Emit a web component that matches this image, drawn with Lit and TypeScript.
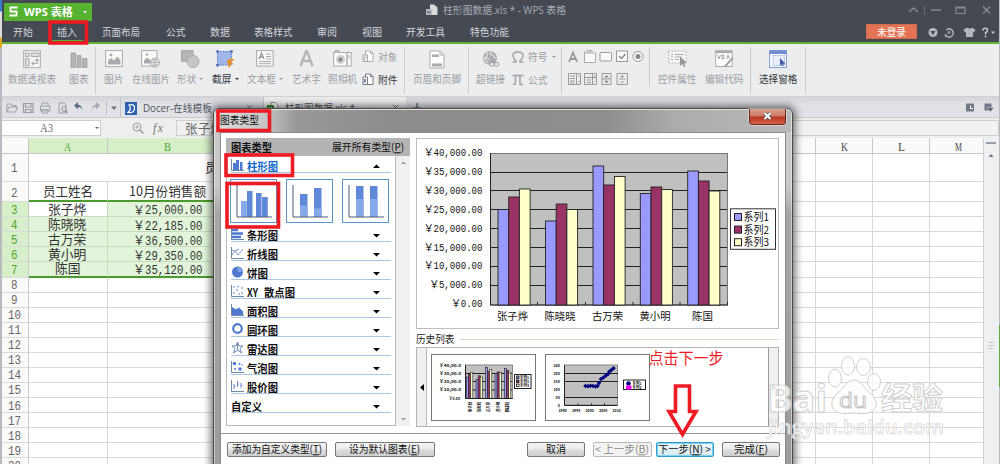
import { LitElement, html, svg, css, nothing } from "lit";
import { customElement } from "lit/decorators.js";

/* One line of text set to an exact advance width; a "(X)" mnemonic gets its letter underlined. */
const fit = (text: string, w: number, size: number, cls = "") => {
  const m = /^(.*\()([A-Z])(\).*)$/.exec(text);
  const body = m ? svg`${m[1]}<tspan text-decoration="underline">${m[2]}</tspan>${m[3]}` : text;
  return html`<svg class="fit ${cls}" width=${w} height=${size} viewBox="0 0 ${w} ${size}"><text x="0" y=${size * 0.88} font-size=${size} textLength=${w} lengthAdjust="spacingAndGlyphs">${body}</text></svg>`;
};

const icon = (w: number, h: number, body: unknown, cls = "") =>
  html`<svg class="ic ${cls}" width=${w} height=${h} viewBox="0 0 ${w} ${h}" fill="none">${body}</svg>`;

const G = "#a9abaf";

const ICONS = {
  pivot: icon(18, 19, svg`<rect x=".7" y=".7" width="16.6" height="17" fill="#f4f5f6" stroke=${G}/><path d="M2.500 3h3.500v3.500h-3.500zM8 3h8v3.500h-8zM2.500 8.500h3.500v7.500h-3.500z" stroke=${G} fill="#dfe0e2"/><path d="M9 13.500h5v-4M12.500 11l1.500-2 1.500 2M10.500 12l-1.500 1.500 1.500 1.500" stroke=${G} stroke-width="1.200"/>`),
  chart: icon(18, 19, svg`<path d="M1 3h4.500v14.500h-4.500zM7 5.500h4v12h-4zM12.500 8.500h4.500v9h-4.500z" fill="#b3b4b6" stroke="#97999c" stroke-width=".7"/>`),
  pic: icon(18, 18, svg`<rect x=".6" y=".6" width="16.800" height="16" fill="#fafafa" stroke=${G}/><path d="M3 14.500v-4l3-2.500 3 2.500 3.500-4 3 4v4z" fill=${G}/><circle cx="6" cy="5" r="1.500" fill=${G}/>`),
  web: icon(19, 18, svg`<path d="M.6.6h15.400v15.400h-15.400z" fill="#fafafa" stroke=${G}/><path d="M3 13.500v-3l3-3 4 3v3z" fill=${G}/><circle cx="6" cy="4.500" r="1.200" fill=${G}/><circle cx="14" cy="12.500" r="4.500" fill="#e3e4e5" stroke=${G}/><path d="M9.500 12.500h9M14 8v9M11 9.500q3 2 6 0M11 15.500q3-2 6 0" stroke=${G} stroke-width=".8"/>`),
  shape: icon(19, 18, svg`<rect x=".5" y=".5" width="11.500" height="11" fill="#b2b4b6" stroke=${G}/><circle cx="12" cy="11.500" r="6" fill="#c4c6c8" stroke=${G}/>`),
  crop: icon(19, 18, svg`<rect x="1.500" y="1.500" width="14" height="13.500" fill="#9fb6ea" stroke="#4d6dc0" stroke-dasharray="1.500 1.200"/><path d="M.3.300h2.400v2.400h-2.400zM14.300.300h2.400v2.400h-2.400zM.3 14h2.400v2.400h-2.400z" fill="#4564b4"/><path d="M17.500 10q-4-1-5.500 1.500q2 1 1 5.500M13 11.500l3.500 3" stroke="#ee8b1c" stroke-width="2"/>`),
  textbox: icon(18, 17, svg`<rect x=".6" y=".6" width="16.500" height="15.500" fill="#fafafa" stroke=${G}/><path d="M3 9l2.500-6 2.500 6M3.800 7h3.400" stroke="#999" stroke-width="1.300"/><path d="M10 4h5M10 6.500h5M10 9h5M3 11.500h12M3 13.700h12" stroke=${G}/>`),
  art: icon(15, 17, svg`<path d="M1.500 16l5.500-14.500h1l5.500 14.500M4 11h7" stroke="#b4b6b8" stroke-width="2.400"/>`),
  camera: icon(19, 17, svg`<rect x=".6" y="2.500" width="17.600" height="13.500" fill="#fafafa" stroke=${G}/><path d="M2 2.500v-1.800h4v1.800" fill="#ccc" stroke=${G}/><path d="M14 3v12.500" stroke=${G} stroke-width="1.500"/><path d="M16 5v4" stroke=${G}/><circle cx="7.500" cy="9.500" r="4" fill="#ddd" stroke="#c4c6c8"/><circle cx="7.500" cy="9.500" r="2.200" fill="#888"/>`),
  header: icon(16, 19, svg`<path d="M1 1h10l4 4v13h-14z" fill="#fff" stroke=${G}/><path d="M11 1v4h4" stroke=${G}/><path d="M3 4.500h7v2.500h-7zM3 13.500h10v3h-10z" fill="#aaacaf"/>`),
  link: icon(18, 18, svg`<circle cx="8" cy="8" r="7" fill="#aaacaf"/><path d="M4 2q3 3 0 5t2 6M9 1q-2 3 1 4t3 4M1.500 8q4-1 6 2" stroke="#dcdddf" stroke-width="1.300"/><rect x="7.500" y="12.500" width="5" height="3.500" rx="1.700" fill="#eee" stroke="#999"/><rect x="12" y="12.500" width="5" height="3.500" rx="1.700" stroke="#999"/>`),
  ctrl: icon(20, 18, svg`<rect x=".7" y="1" width="17.500" height="12" stroke=${G} stroke-dasharray="1.500 1.500" fill="#f6f6f6"/><path d="M3 4.500h2M7 4.500h9M3 7h2M7 7h6M3 9.500h2M7 9.500h4" stroke=${G}/><path d="M12 6l7 7-3 .3 1.500 3.200-1.500.7-1.500-3.200-2.500 2z" fill="#97999c"/>`),
  vba: icon(19, 18, svg`<rect x=".7" y=".7" width="16.500" height="15.800" fill="#fff" stroke=${G}/><path d="M.7.700h16.500v2.500h-16.500z" fill=${G}/><path d="M2.500 5l1.500 4 1.500-4M7 5v4h1.500q1.500-1 0-2q1-1 0-2zM11.500 9l1.500-4 1.500 4" stroke="#999" stroke-width=".9"/><path d="M17.500 7l-7 7.500-2 2 3-.5 7-7.500z" fill="#96989b"/>`),
  pane: icon(18, 18, svg`<rect x=".6" y=".6" width="16.800" height="16.800" fill="#fff" stroke="#7c97cf"/><path d="M.6.600h16.800v3.400h-16.800z" fill="#6f8fd0"/><rect x="4" y="5.500" width="11.500" height="10" fill="#e8eefb" stroke="#92a8d8" stroke-dasharray="1.200 1"/><path d="M11 8v8l2-1.800 1 2 1-.5-1-2h2.500z" fill="#3f5fa5"/>`),
  obj: icon(12, 13, svg`<path d="M3.500 1h5l2.500 2.500v8h-7.500z" fill="#fff" stroke=${G}/><path d="M8.500 1v2.500h2.500" stroke=${G}/><path d="M1 5h4.500v6.500h-4.500z" fill="#f4f4f4" stroke=${G}/><path d="M2.500 7v3M2.500 7h2" stroke=${G}/>`),
  clip: icon(12, 13, svg`<path d="M3.500 1h5l2.500 2.500v8h-7.500z" fill="#fff" stroke="#777b85"/><path d="M8.500 1v2.500h2.500" stroke="#777b85"/><path d="M1 4h4.500v7.500h-4.500z" fill="#fff" stroke="#777b85"/><path d="M3 6v3.500" stroke="#444b7a" stroke-width="1.400"/>`),
};

const TABS: [string, number, number][] = [
  ["开始", 12.5, 20], ["插入", 57, 20], ["页面布局", 101.5, 38], ["公式", 165.5, 19.5], ["数据", 209.5, 20],
  ["表格样式", 254, 38.5], ["审阅", 317, 20], ["视图", 361.5, 20], ["开发工具", 406, 39], ["特色功能", 469.5, 39],
];

const AMOUNTS: [string, string][] = [
  ["张子烨", "25,000.00"], ["陈晓晓", "22,185.00"], ["古万荣", "36,500.00"], ["黄小明", "29,350.00"], ["陈国", "35,120.00"],
];

const BARS = [
  [498, 209.5, 197, 189], [545.5, 221, 204, 209.5], [593, 166, 185, 176.5], [640.3, 193.5, 187, 189.5], [687.7, 171, 181, 191],
];
const FILLS = ["#9999ff", "#993366", "#ffffcc"];

@customElement("app-root")
export class AppRoot extends LitElement {
  static styles = css`
    :host { display: block; width: 1000px; height: 464px; overflow: hidden; position: relative; background: #b9bbc0;
      font-family: "Noto Sans CJK SC", sans-serif; color: #333; font-size: 10px; line-height: 1; }
    * { box-sizing: border-box; }
    svg { display: block; flex: none; overflow: visible; }
    .fit { fill: currentColor; }
    .mono { font-family: "Liberation Mono", "Noto Sans CJK SC", monospace; }
    .serif { font-family: "Liberation Serif", serif; }
    .lat { font-family: "Open Sans", "Noto Sans CJK SC", sans-serif; }
    .bold { font-weight: 700; }
    .window { margin-left: 1.5px; width: 997px; height: 464px; display: flex; flex-direction: column; background: #fff; }
    .top { height: 42px; background: #454952; flex: none; }
    .titlebar { height: 20px; display: flex; align-items: center; }
    .brand { width: 88px; height: 18px; margin: 3px 0 0 2.5px; background: #57b232; color: #fff; display: flex; align-items: center; padding-left: 5px; gap: 6px; }
    .caret { border: 2px solid transparent; border-top: 2.5px solid currentColor; border-bottom: 0; width: 0; height: 0; }
    .brand .caret { margin-left: 4px; }
    .doc { margin-left: 334px; display: flex; gap: 5px; align-items: center; color: #a7abb3; }
    .wctl { margin-left: auto; display: flex; padding-right: 6px; }
    .menu { display: flex; height: 22px; align-items: center; color: #d3d6db; padding-top: 2px; }
    .menu .t { flex: none; }
    .login { margin-left: auto; width: 51px; height: 15px; background: #e27354; border: 1px solid #cf6c50; color: #fff; display: flex; align-items: center; justify-content: center; margin-top: -1px; }
    .menu .help { margin: 0 3px 0 11px; }
    .green { height: 2px; background: #5fb531; flex: none; }
    .ribbon { height: 53px; flex: none; background: #ebedef; display: flex; border-bottom: 1px solid #cfd1d5; color: #9c9ea2; }
    .cell { display: flex; flex-direction: column; align-items: center; padding-top: 6px; position: relative; flex: none; }
    .cell .pic { height: 24px; }
    .cell .row { display: flex; gap: 3px; align-items: center; }
    .bar { width: 1px; height: 47px; margin: 3px 0 0 -1px; background: #cbcdd1; flex: none; }
    .bar.short { height: 40px; }
    .dark { color: #35373b; }
    .pair { display: flex; flex-direction: column; gap: 10px; padding-top: 6px; flex: none; }
    .pair .row { display: flex; gap: 4px; align-items: center; height: 13px; }
    .tabs { height: 21px; flex: none; background: linear-gradient(#d4d6dc, #e0e2e6 40%); display: flex; border-bottom: 1px solid #c9cbcf; }
    .quick { width: 118px; display: flex; align-items: center; padding: 1px 0 0 4px; }
    .doctab { width: 143px; display: flex; align-items: center; gap: 6px; padding: 2px 0 0 4px; color: #50545c; border-left: 1px solid #c3c5ca; }
    .doctab.on { background: #edeef0; padding-left: 3px; gap: 6px; }
    .right { margin-left: auto; display: flex; align-items: center; padding-right: 5px; }
    .formula { height: 20px; flex: none; background: #eee; display: flex; align-items: center; color: #666; }
    .namebox { width: 99px; height: 16px; background: #fff; border: 1px solid #cdcdcd; border-left: 0; display: flex; align-items: center; padding-left: 38px; gap: 42px; }
    .fx { margin-left: 31px; display: flex; gap: 9px; align-items: center; }
    .fbox { margin-left: 12px; flex: 1; height: 16px; background: #f1f1f1; border: 1px solid #cfcfcf; display: flex; align-items: center; padding-left: 8px; }
    .body { flex: 1; display: flex; min-height: 0; }
    .sheet { width: 981.5px; overflow: hidden; flex: none; }
    .r { display: flex; height: 15.07px; }
    .r > div { border-right: 1px solid #d6d6d6; border-bottom: 1px solid #d9d9d9; width: 57.1px; flex: none; display: flex; align-items: center; justify-content: center; }
    .r > .n { width: 27px; background: #fafafa; color: #666; border-right-color: #c9c9c9; }
    .r > .a { width: 79px; }
    .r > .b { width: 120.5px; }
    .r > .gap { width: 531px; }
    .r.head { height: 15.6px; }
    .r.head > div { background: #fafafa; color: #444; border-color: #c6c6c6; padding-top: 1px; }
    .r.head > .g, .r.sel > .n { background: #d6efc8; color: #4aa32c; }
    .r.sel > .sc { background: #e2f5da; border-color: #c5dcbb; }
    .r.sel > .cur { background: #fff; }
    .r.r1 { height: 28.8px; }
    .r.r2 { height: 19.8px; }
    .r.r2 > div { padding-top: 1px; }
    .r.r2 > .sc, .r.last > .sc { border-bottom: 2px solid #4b9a2d; }
    .r > .merge { width: 730.5px; justify-content: flex-start; padding-left: 176px; }
    .money { display: flex; align-items: center; padding-top: 1px; }
    .vs { flex: 1; background: #eff0f2; border-left: 1px solid #cfd1d4; display: flex; flex-direction: column; align-items: center; padding-top: 4px; }
    .edge { position: absolute; left: 999px; top: 325px; width: 1px; height: 62px; background: #62ac3e; }
    .desk { position: absolute; left: 0; top: 0; width: 1.5px; height: 50px; background: linear-gradient(#3a7bd0 0 11px, #ddd 12px 37px, #e0a71c 38px 47px, #bbb 48px); }

    .dialog { position: absolute; left: 212.5px; top: 108px; width: 580.5px; height: 370px; padding: 0 6px; border: 1px solid #4b4b4b; border-radius: 6px 6px 0 0;
      background: linear-gradient(#c9c9c9 0 76px, #a6a6a6 105px, #9b9b9b); box-shadow: inset 0 0 0 1px rgba(255,255,255,.45), 0 0 9px 2px rgba(0,0,0,.6); }
    .cap { height: 22px; margin: 1px -5px 0; display: flex; align-items: flex-start; border-radius: 5px 5px 0 0; background: linear-gradient(90deg, #ddd 0, #c4c4c4 9%, #999 14%, #8c8c8c 32%, #8e8e8e 68%, #acacac 80%, #b8b8b8); color: #111; }
    .cap .name { margin: 5px 0 0 5px; }
    .close { margin: -1px 5px 0 auto; width: 37px; height: 15.5px; border: 1px solid #6b2a20; border-top: 0; border-radius: 0 0 4px 4px; background: linear-gradient(#dba092, #cd7765 48%, #b43420 52%, #d76444); display: flex; align-items: center; justify-content: center; box-shadow: 0 0 0 .5px #eee; }
    .client { height: 340px; background: #fff; border: 1px solid #888; display: flex; flex-direction: column; }
    .cols { height: 301px; padding: 5px 0 0 5px; display: flex; gap: 6px; border-bottom: 1px solid #999; flex: none; }
    .left { width: 184.5px; color: #111; }
    .lh { height: 18px; background: #b4b4b4; display: flex; align-items: center; justify-content: space-between; padding: 0 6px 0 5px; }
    .lb { display: flex; height: 270px; }
    .list { width: 170.5px; border: 1px solid #bbb; border-top: 0; padding: 0 4px; }
    .sb { flex: 1; background: #f0f0f0; display: flex; flex-direction: column; justify-content: space-between; align-items: center; padding: 5px 0; }
    .it { height: 19.06px; border-bottom: 1px solid #a9c6e3; display: flex; align-items: flex-end; width: 160px; gap: 3px; }
    .it .ic { margin-bottom: 1px; }
    .it.first { height: 17px; color: #1268cc; }
    .it .ic.ar { margin: 0 11px 3px auto; }
    .it.first .ic.ar { margin-bottom: 4px; }
    .th { display: flex; gap: 9px; height: 49.5px; padding-top: 5.5px; margin-left: -1px; }
    .rightcol { width: 363px; }
    .hist { display: flex; height: 18px; align-items: center; gap: 5px; color: #222; padding-top: 2px; }
    .hist i { flex: 1; height: 1px; background: #dcdcd2; }
    .hl { height: 80px; border: 1px solid #b4b4b4; display: flex; align-items: center; }
    .hs { width: 10px; height: 78px; background: #f0f0f0; border-right: 1px solid #bbb; display: flex; align-items: center; justify-content: center; }
    .hs.e { margin-left: auto; border: 0; border-left: 1px solid #999; }
    .hl .m { margin-left: 4px; }
    .hl .m + .m { margin-left: 9px; }
    .foot { display: flex; padding: 8px 0 0 6px; color: #111; }
    .btn { height: 15px; border: 1px solid #777; border-radius: 2px; background: linear-gradient(#f4f4f4, #ebebeb 48%, #dcdcdc 52%, #cfcfcf); display: flex; align-items: center; justify-content: center; flex: none; }
    .btn.off { color: #888; border-color: #b8b8b8; background: #f4f4f4; }
    .btn.def { border: 1.5px solid #2b9bd0; box-shadow: inset 0 0 0 1px #7fd3f0; background: linear-gradient(#eef7fb, #d5e9f2); }
    .over { position: absolute; left: 0; top: 0; }
  `;

  private cell(w: number, ic: unknown, label: string, lw: number, opt: { caret?: boolean; dark?: boolean } = {}) {
    return html`<div class="cell ${opt.dark ? "dark" : ""}" style="width:${w}px">
      <div class="pic">${ic}</div>
      <div class="row">${fit(label, lw, 10)}${opt.caret ? html`<i class="caret"></i>` : nothing}</div>
    </div>`;
  }

  private top() {
    let x = 1.5;
    return html`<header class="top">
      <div class="titlebar">
        <div class="brand">${icon(9, 11, svg`<path d="M8.500 1.500h-7v4h6v4h-7" stroke="#fff" stroke-width="1.800"/>`)}
          ${fit("WPS 表格", 49, 11, "lat bold")}<i class="caret"></i></div>
        <div class="doc">${icon(12, 12, svg`<path d="M4 .5h4l3.500 3v7.500h-7.500z" fill="#d8dade"/><path d="M0 5h6v6h-6z" fill="#b9bcc2"/><path d="M2 9.500v-3M4 9.500v-2" stroke="#454952"/>`)}
          ${fit("柱形图数据.xls * - WPS 表格", 123, 10.5, "lat")}</div>
        <div class="wctl">${icon(86, 12, svg`<path d="M2 8l4.500-4 4.500 4" stroke="#858992" stroke-width="1.500"/><path d="M17.500 1v10" stroke="#666b74"/><path d="M24 6h10" stroke="#858992" stroke-width="1.500"/><path d="M49 3h9v6.500h-9zM49 4h9" stroke="#858992" stroke-width="1.200"/><path d="M76 2.500l7 7M83 2.500l-7 7" stroke="#858992" stroke-width="1.500"/>`)}</div>
      </div>
      <div class="menu">
        ${TABS.map(([t, at, w]) => { const gap = at - x; x = at + w; return html`<div class="t" style="margin-left:${gap}px">${fit(t, w, 10)}</div>`; })}
        <div class="login">${fit("未登录", 29, 10)}</div>
        <div class="help">${icon(68, 11, svg`<circle cx="5" cy="5.500" r="4.500" fill="#b3b7be"/><path d="M2.500 4h5l-2.500 4z" fill="#454952"/><path d="M18.500 3a4 4 0 1 1 0 6h-1v-2" stroke="#b3b7be" stroke-width="1.300"/><circle cx="21" cy="5.500" r="1" stroke="#b3b7be"/><path d="M38 1h2q1.500 1.500 3 0h2l2.500 2-1.500 2.500-1-.5v5h-7v-5l-1 .5-1.500-2.500z" fill="#b3b7be"/><path d="M55 3.500q0-2.200 2.300-2.200t2.300 2q0 1.200-2 2.400v1.500M57.500 8.500v1.700" stroke="#c6c9ce" stroke-width="1.600"/><path d="M63 4.500h4l-2 2.500z" fill="#c6c9ce"/>`)}</div>
      </div>
    </header><div class="green"></div>`;
  }

  private ribbon() {
    const c = this.cell.bind(this);
    const bar = html`<div class="bar"></div>`;
    return html`<div class="ribbon">
      ${c(61, ICONS.pivot, "数据透视表", 48)}${c(33, ICONS.chart, "图表", 19.5)}${bar}
      ${c(36, ICONS.pic, "图片", 19.5)}${c(38, ICONS.web, "在线图片", 38)}${c(41, ICONS.shape, "形状", 19.5, { caret: true })}
      ${c(30, ICONS.crop, "截屏", 19.5, { caret: true, dark: true })}${c(48, ICONS.textbox, "文本框", 29, { caret: true })}
      ${c(35, ICONS.art, "艺术字", 29)}${c(38, ICONS.camera, "照相机", 29)}
      <div class="pair" style="width:43.5px;padding-left:0">
        <div class="row">${ICONS.obj}${fit("对象", 19.5, 10)}</div>
        <div class="row dark">${ICONS.clip}${fit("附件", 19.5, 10)}</div></div>${bar}
      ${c(64, ICONS.header, "页眉和页脚", 48)}${bar}
      ${c(43, ICONS.link, "超链接", 29)}
      <div class="pair" style="width:50px">
        <div class="row">${icon(12, 12, svg`<path d="M.500 11h3.500v-1.500q-3-2-3-5q0-3.500 5-3.500t5 3.500q0 3-3 5v1.500h3.500" stroke="#a1a3a7" stroke-width="1.400"/>`)}${fit("符号", 19.5, 10)}<i class="caret"></i></div>
        <div class="row">${icon(12, 12, svg`<path d="M.5 1.500h11M3.500 1.500v7.500q0 1.500-2.500 1.500M8 1.500v9h3" stroke="#a1a3a7" stroke-width="1.500"/>`)}${fit("公式", 19.5, 10)}</div></div>${bar}
      <div class="pair" style="width:88px;padding-left:6px">
        ${icon(76, 36, svg`<path d="M1 12l4-9.500 4 9.500M2.500 9h5" stroke="#999" stroke-width="1.800"/>
        <path d="M16.500 3h11v9.500h-11zM16.500 4.500v-3M19 3v-2.500h2v2M22 3v-2.500h2v2" stroke=${G} fill="#fafafa"/>
        <rect x="32" y="2.500" width="11.500" height="8.500" rx="1" stroke="#999" fill="#fafafa"/>
        <rect x="48.500" y="1" width="11" height="10.500" stroke="#999" fill="#fafafa"/><path d="M51 6l2.500 2.500 4-4.500" stroke="#888" stroke-width="1.400"/>
        <circle cx="70" cy="6.500" r="5" stroke="#999" fill="#fafafa"/><circle cx="70" cy="6.500" r="2.500" fill="#888"/>
        <path d="M.5 23.500h12v11h-12zM8.500 23.500v11M2 26h5M2 28.500h5M2 31h5M2 33h4M10 26h1.500M10 31.500h1.500" stroke="#999"/>
        <path d="M16.500 23.500h12v11h-12zM16.500 27.500h12M24.500 23.500v11M18.500 30h4.500M18.500 32.500h4.500M26 26h1.500M26 31.500h1" stroke="#999"/>
        <path d="M34 23.500h9v11h-9zM34 29h9" stroke="#999"/><path d="M36 27.500l2.500-2.500 2.500 2.500zM36 30.800h5l-2.500 2.500z" fill="#888"/>
        <path d="M49 23.500h10.500v11h-10.500zM51 29h6.500M54.200 25v3M52.700 26.500h3M52.700 32h3" stroke="#999"/>`)}
      </div><div class="bar short"></div>
      ${c(55, ICONS.ctrl, "控件属性", 38.5)}${c(38, ICONS.vba, "编辑代码", 38.5)}
      <div style="width:8px"></div>${bar}${c(54.5, ICONS.pane, "选择窗格", 38.5, { dark: true })}${bar}
    </div>`;
  }

  private bars() {
    return html`<div class="tabs">
      <div class="quick">${icon(114, 14, svg`<path d="M1 11v-8h4l1 1.500h4v1.500M1 11l2-5h8.500l-2 5z" stroke="#9b9ea5"/>
        <path d="M17.500 2.500h9.500v9h-9.500zM19.500 2.500v3.500h5.500v-3.500M19.500 11.500v-3h5.500v3" stroke="#9b9ea5" stroke-width="1.200"/>
        <path d="M36 5v-3h6v3M34.500 5h9.500v5h-9.500zM36 8.500h6v3.500h-6z" stroke="#9b9ea5"/>
        <path d="M53 2h5l2 2v8h-7z" stroke="#9b9ea5"/><circle cx="58" cy="8" r="2.300" fill="#e2e4e8" stroke="#8b8e95"/><path d="M59.500 9.500l2 2.500" stroke="#8b8e95" stroke-width="1.300"/>
        <path d="M76 11q.5-5-4-5v2.500l-4-4 4-3.500v2.500q5 1 4 7.500z" fill="#5c6a85"/>
        <path d="M86 11q-.5-5 4-5v2.500l4-4-4-3.500v2.500q-5 1-4 7.500z" fill="#a6a9b1"/>
        <path d="M100.500 0v14" stroke="#c3c5ca"/><path d="M105 5.500h6l-3 3.500z" fill="#6b6e75"/>`)}</div>
      <div class="doctab">${icon(12, 13, svg`<path d="M0 0h12v13h-12z" fill="#2f62b0"/><path d="M4 3q6-1.500 5.500 3.500t-6.500 4q4-3.500 1-7.500z" stroke="#fff" stroke-width="1.200"/>`)}
        ${fit("Docer-在线模板", 69, 10.5, "lat")}${icon(40, 8, svg`<path d="M29 1l5 5M34 1l-5 5" stroke="#777"/>`)}</div>
      <div class="doctab on">${icon(12, 12, svg`<path d="M4 .5h4l3 3v8h-7z" fill="#fff" stroke="#888"/><path d="M0 3h7v7h-7z" fill="#3f8d2c"/><path d="M2 5l3 3M5 5l-3 3" stroke="#fff"/>`)}
        ${fit("柱形图数据.xls *", 70, 10.5, "lat")}${icon(50, 8, svg`<path d="M32 1l5 5M37 1l-5 5" stroke="#666"/>`)}</div>
      ${icon(20, 20, svg`<path d="M11 6v9M7.500 11h7" stroke="#4b5270" stroke-width="1.200"/>`)}
      <div class="right">${icon(28, 9, svg`<path d="M0 .5h8v8h-8z" fill="#747986"/><path d="M4.500 2.500v3h2.500" stroke="#fff"/><path d="M18.500 .500h7v5h-2v2h-5z" fill="#747986"/><path d="M21 4.500h7l-3.500 4.500z" fill="#5c6170" stroke="#e0e2e6" stroke-width=".5"/>`)}</div>
    </div>
    <div class="formula"><div class="namebox">${fit("A3", 13, 11.5, "serif")}<i class="caret"></i></div>
      <div class="fx">${icon(12, 12, svg`<circle cx="5" cy="5" r="4" stroke="#999"/><path d="M8 8l3.500 3.500" stroke="#999" stroke-width="1.500"/><path d="M3 5h4M5 3v4" stroke="#aaa"/>`)}
      ${icon(11, 12, svg`<text x="0" y="9.500" font-size="12" font-style="italic" font-family="Liberation Serif" fill="#777" textLength="10">fx</text>`)}</div>
      <div class="fbox">${fit("张子烨", 38, 13)}</div></div>`;
  }

  private sheet() {
    const tail = html`<div class="gap"></div><div></div><div></div><div></div><div></div>`;
    const h = (s: string) => fit(s, 7, 12, "serif");
    return html`<div class="body"><div class="sheet">
      <div class="r head"><div class="n"></div><div class="a g">${h("A")}</div><div class="b g">${h("B")}</div><div class="gap"></div>
        <div></div><div>${h("K")}</div><div>${h("L")}</div><div>${h("M")}</div></div>
      <div class="r r1"><div class="n">${fit("1", 6.5, 13, "mono")}</div><div class="merge">${fit("员工销售额统计表", 104, 13)}</div><div></div><div></div><div></div><div></div></div>
      <div class="r r2"><div class="n">${fit("2", 6.5, 13, "mono")}</div><div class="a sc">${fit("员工姓名", 50, 13)}</div><div class="b sc">${fit("10月份销售额", 77, 13)}</div>${tail}</div>
      ${AMOUNTS.map(([n, v], i) => html`<div class="r sel ${i === 4 ? "last" : ""}"><div class="n">${fit(String(i + 3), 6.5, 13, "mono")}</div>
        <div class="a sc ${i ? "" : "cur"}">${fit(n, n.length * 12.8, 13)}</div>
        <div class="b sc"><div class="money">${fit("￥", 12, 12)}${fit(v, 57.5, 12.5, "mono")}</div></div>${tail}</div>`)}
      ${Array.from({ length: 13 }, (_, i) => html`<div class="r"><div class="n">${fit(String(i + 8), i < 2 ? 6.5 : 13, 13, "mono")}</div><div class="a"></div><div class="b"></div>${tail}</div>`)}
    </div><div class="vs">${icon(10, 220, svg`<path d="M0 1h10" stroke="#7a8397" stroke-width="1.500"/><path d="M2.500 15l2.500-3 2.500 3z" fill="#6d7689"/><path d="M2.500 200.500h5M2.500 203.500h5M2.500 206.500h5" stroke="#c3c5c9"/>`)}</div></div>`;
  }

  private thumbs() {
    return html`<div class="th">${[
      [[10, 22, 16], [16, 12, 26], [25, 14, 24], [31, 18, 20]],
      [[13, 15, 23], [27, 9, 29]],
      [[13, 7, 31], [27, 7, 31]],
    ].map((b, k) => icon(47, 44, svg`<rect x=".5" y=".5" width="46" height="43" fill="#fff" stroke="#5b94cd"/>
      ${b.map(([x, y, h], i) => {
        const split = k === 0 ? y : k === 1 ? 24 + x / 5 : 20;
        const w = k ? 7.5 : 5.5;
        return svg`<rect x=${x + 1} y=${y} width=${w} height=${h} fill="#6088d8"/>${k || i % 3 === 0 ? svg`<rect x=${x + 1} y=${split} width=${w} height=${38 - split} fill=${k || !i ? "#86a9ea" : "#6088d8"}/>` : nothing}`;
      })}
      <path d="M7 6v32h35" stroke="#4c5c78"/>`))}</div>`;
  }

  private list() {
    const ax = (b: unknown) => icon(13, 12, svg`<path d="M.5 0v11.500h12.500" stroke="#7187a8"/>${b}`);
    const dots = (p: number[][]) => p.map(([x, y, r]) => svg`<circle cx=${x} cy=${y} r=${r || 0.8} fill="#4f79cf"/>`);
    const items: [string, number, unknown][] = [
      ["条形图", 31, ax(svg`<path d="M1 2h6M1 5.500h11M1 9h9" stroke="#4f79cf" stroke-width="2.400"/>`)],
      ["折线图", 31, ax(svg`<path d="M1 8l3-4 3 4 5-6M1 3l3 1 4-2" stroke="#7d9ad2"/>`)],
      ["饼图", 21, icon(13, 12, svg`<circle cx="6.500" cy="6" r="5.500" fill="#4f79cf"/><path d="M6.500 6v-5.500a5.500 5.500 0 0 1 5.500 5.500z" fill="#7ea0e2"/>`)],
      ["XY 散点图", 47, ax(dots([[3, 2, 0], [7, 1.5, 0], [11, 3, 0], [3, 8, 0], [6, 5, 0], [11, 8, 0], [8, 9, 0]]))],
      ["面积图", 31, ax(svg`<path d="M1 11v-8l4 2.500 3-2 4 4v3.500z" fill="#4f79cf"/>`)],
      ["圆环图", 31, icon(13, 12, svg`<circle cx="6.500" cy="5.500" r="4.300" stroke="#4f79cf" stroke-width="2.200"/>`)],
      ["雷达图", 31, icon(13, 12, svg`<path d="M6.500 0l1.500 4h4l-3 2.500 1.500 4.500-4-3-4 3 1.500-4.500-3-2.500h4zM6.500 0v8" stroke="#6d86b5"/>`)],
      ["气泡图", 31, ax(dots([[3.5, 2.5, 1.8], [8.5, 3, 1], [4, 8, 1], [9, 8, 1.8], [11, 4, 0.7]]))],
      ["股价图", 31, ax(svg`<path d="M3 4v5M6.500 1v6M10 3v5M3 6h1.500M6.500 4h1.500M10 5.500h1.500" stroke="#6d8fd6"/>`)],
      ["自定义", 31, nothing],
    ];
    const name = (t: string, w: number) => t.startsWith("XY")
      ? html`${fit("XY", 11, 11, "bold")}<span></span>${fit("散点图", 31, 11, "bold")}` : fit(t, w, 11, "bold");
    return html`<div class="left"><div class="lh">${fit("图表类型", 41, 11, "bold")}${fit("展开所有类型(P)", 72, 10.5)}</div>
      <div class="lb"><div class="list">
        <div class="it first">${ax(svg`<path d="M2 4h3v7h-3zM5 1h3v10h-3zM9 3h2.500v8h-2.500z" fill="#4f79cf"/>`)}${fit("柱形图", 31, 11, "bold")}${icon(7, 4, svg`<path d="M0 4l3.500-3.500 3.500 3.500z" fill="#000"/>`, "ar")}</div>
        ${this.thumbs()}
        ${items.map(([t, w, i]) => html`<div class="it">${i}${name(t, w)}${icon(7, 4, svg`<path d="M0 0h7l-3.500 3.500z" fill="#000"/>`, "ar")}</div>`)}
      </div><div class="sb">${icon(5, 3, svg`<path d="M0 3l2.500-2.500 2.500 2.500z" fill="#999"/>`)}${icon(5, 3, svg`<path d="M0 0h5l-2.500 2.500z" fill="#999"/>`)}</div></div></div>`;
  }

  private chart() {
    const t = (s: string, x: number, y: number, w: number, size = 10.5) =>
      svg`<text x=${x} y=${y} font-size=${size} textLength=${w} lengthAdjust="spacingAndGlyphs">${s}</text>`;
    const labels = ["40,000.00", "35,000.00", "30,000.00", "25,000.00", "20,000.00", "15,000.00", "10,000.00", "5,000.00", "0.00"];
    return html`<svg width="363" height="191" viewBox="416 138 363 191" fill="#111">
      <rect x="416.500" y="138.500" width="362" height="190" fill="#fff" stroke="#bdbdbd"/>
      <rect x="490.500" y="153.500" width="237" height="151.500" fill="#c0c0c0" stroke="#777"/>
      ${[172.5, 190.5, 209.5, 228.5, 247.5, 266.5, 285.5].map((y) => svg`<path d="M490 ${y}h237" stroke="#222"/>`)}
      <path d="M490.500 153v152h237M537.500 305v-3M585.500 305v-3M633 305v-3M680 305v-3M727.500 305v-3" stroke="#222" fill="none"/>
      ${BARS.map((b) => FILLS.map((f, i) => svg`<rect x=${b[0] + i * 10.7} y=${b[i + 1]} width="10.700" height=${305 - b[i + 1]} fill=${f} stroke="#222" stroke-width=".9"/>`))}
      ${labels.map((l, i) => { const w = l.length * 5.45; return svg`${t("￥", 482 - w - 9.5, 156 + i * 18.9, 10.5)}<g class="mono">${t(l, 482.5 - w, 156 + i * 18.9, w, 11)}</g>`; })}
      ${t("张子烨", 497, 320, 31)}${t("陈晓晓", 544.5, 320, 31)}${t("古万荣", 592, 320, 31)}${t("黄小明", 639.5, 320, 31)}${t("陈国", 692, 320, 21)}
      <rect x="730.500" y="208.800" width="45" height="40.500" fill="#fff" stroke="#333"/>
      ${FILLS.map((f, i) => svg`<rect x="734.500" y=${213.5 + i * 12.6} width="7" height="7" fill=${f} stroke="#222"/>${t("系列" + (i + 1), 743.5, 221 + i * 12.6, 25.5, 11)}`)}
    </svg>`;
  }

  private history() {
    const a = ["40,00.0", "30,00.0", "20,00.0", "10,00.0", "0.00"];
    const s = (x: number, y: number, txt: string, w: number, size = 4) => svg`<text x=${x} y=${y} font-size=${size} font-weight="700" textLength=${w} lengthAdjust="spacingAndGlyphs" fill="#111">${txt}</text>`;
    return html`<div class="hist">${fit("历史列表", 38.5, 10)}<i></i></div>
    <div class="hl"><div class="hs">${icon(4, 7, svg`<path d="M4 0v7l-4-3.500z" fill="#000"/>`)}</div>
      <svg class="m" width="105" height="67" viewBox="431 354 105 67">
        <rect x="431.500" y="354.500" width="104" height="66" fill="#fff" stroke="#777"/>
        <rect x="465.500" y="365" width="47" height="33.500" fill="#c0c0c0" stroke="#888"/>
        ${[373.5, 381.5, 390].map((y) => svg`<path d="M465 ${y}h47" stroke="#222"/>`)}
        ${BARS.map((b, g) => FILLS.map((f, i) => svg`<rect x=${466.5 + g * 9.5 + i * 2.1} y=${398.5 - (305 - b[i + 1]) * 0.225} width="2.100" height=${(305 - b[i + 1]) * 0.225} fill=${f} stroke="#222" stroke-width=".6"/>`))}
        <path d="M465.500 365v33.500h47" stroke="#222" fill="none"/>
        ${a.map((l, i) => s(i === 4 ? 449 : 439, 366.5 + i * 8.3, "￥" + l, i === 4 ? 11 : 22))}
        ${AMOUNTS.map(([n], i) => svg`<g transform="translate(${471.5 + i * 9.4} 412) rotate(-90)">${s(0, 0, n, 10, 4)}</g>`)}
        <rect x="514.500" y="374.500" width="16.500" height="14" fill="#fff" stroke="#222"/>
        ${FILLS.map((f, i) => svg`<rect x="516.500" y=${376 + i * 4} width="2.500" height="2.500" fill=${f} stroke="#111" stroke-width=".8"/>${s(520, 379 + i * 4, "系列" + (i + 1), 9)}`)}
      </svg>
      <svg class="m" width="105" height="67" viewBox="545 354 105 67">
        <rect x="545.500" y="354.500" width="104" height="66" fill="#fff" stroke="#777"/>
        <rect x="564.500" y="365" width="53" height="40" fill="#c0c0c0" stroke="#888"/>
        ${[373.5, 381.5, 397.5].map((y) => svg`<path d="M564 ${y}h54" stroke="#222"/>`)}
        <path d="M564.500 365v40.500h53M578 405v-1.500M591.500 405v-1.500M604.500 405v-1.500" stroke="#222" fill="none"/>
        ${[[585.5, 386], [588, 386.3], [590.5, 385.7], [593, 386], [595.5, 386.5], [597.5, 386], [599, 383], [601, 379], [603.5, 377.5], [606, 375.5], [608, 374], [609.5, 371.5], [611.5, 370], [613.5, 368.3]]
          .map(([x, y]) => svg`<path d="M${x} ${y - 2.3}l2.300 2.300-2.300 2.300-2.300-2.300z" fill="#00007e"/>`)}
        ${["240", "200", "150", "100", "50", "0"].map((l, i) => s(560 - l.length * 2.2, 366.5 + i * 8, l, l.length * 2.2))}
        ${["1990", "1995", "2000", "2005", "2010"].map((l, i) => s(558.5 + i * 13.5, 411.5, l, 8.5))}
        <rect x="623.500" y="380" width="22" height="9.500" fill="#fff" stroke="#222"/>
        <circle cx="628.500" cy="383.500" r="2.300" fill="#00007e"/><path d="M626 385.500h5.500v4h-5.500z" fill="#f0f"/>${s(632.5, 384.5, "系列1", 9)}${s(632.5, 388.5, "系列2", 9)}
      </svg>
      <div class="hs e">${icon(4, 7, svg`<path d="M0 0v7l4-3.500z" fill="#999"/>`)}</div></div>`;
  }

  private btn(w: number, gap: number, text: string, tw: number, cls = "") {
    return html`<div class="btn ${cls}" style="width:${w}px;margin-left:${gap}px">${fit(text, tw, 10.5)}</div>`;
  }

  render() {
    const b = this.btn.bind(this);
    return html`<div class="window">${this.top()}${this.ribbon()}${this.bars()}${this.sheet()}</div>
      <div class="desk"></div><div class="edge"></div>
      <section class="dialog">
        <div class="cap"><div class="name">${fit("图表类型", 39, 10.5)}</div>
          <div class="close">${icon(9, 8, svg`<path d="M1.500 1l6 6M7.500 1l-6 6" stroke="#555" stroke-width="3.400"/><path d="M1.500 1l6 6M7.500 1l-6 6" stroke="#fff" stroke-width="2"/>`)}</div></div>
        <div class="client">
          <div class="cols">${this.list()}<div class="rightcol">${this.chart()}${this.history()}</div></div>
          <div class="foot">${b(100, 0, "添加为自定义类型(T)", 90)}${b(100, 8, "设为默认图表(E)", 71)}
            ${b(58, 92, "取消", 20)}${b(59, 8, "< 上一步(B)", 54, "off")}${b(58, 4, "下一步(N) >", 53, "def")}${b(58, 8, "完成(F)", 34)}</div>
        </div>
      </section>
      <svg class="over" width="1000" height="464" viewBox="0 0 1000 464" fill="none">
        <path d="M52 40.500h31" stroke="#57b232"/>
        <g fill="#fff" fill-opacity=".75" stroke="#d0d0d0" stroke-width="1">
          <text x="767" y="412" font-size="37" font-weight="700" font-family="Open Sans" textLength="60" lengthAdjust="spacingAndGlyphs">Bai</text>
          <text x="881" y="409" font-size="31" font-weight="700" font-family="Noto Sans CJK SC" textLength="62" lengthAdjust="spacingAndGlyphs">经验</text>
          <ellipse cx="835" cy="378" rx="6.500" ry="9"/><ellipse cx="848" cy="366" rx="6.500" ry="9"/><ellipse cx="863.500" cy="367" rx="7" ry="8.500"/><ellipse cx="874" cy="382" rx="6.500" ry="8.500"/>
          <path d="M854 380q6 0 11 8l9 9q5 8-1 14q-5 4-19 2q-14 2-19-2q-6-6-1-14l9-9q5-8 11-8z"/>
          <text x="839" y="408" font-size="22" font-family="Open Sans" stroke="#c4c4c4" textLength="28" lengthAdjust="spacingAndGlyphs">du</text>
          <text x="768" y="434" font-size="19" font-family="Open Sans" font-weight="600" stroke-width=".6" textLength="176" lengthAdjust="spacingAndGlyphs">jingyan.baidu.com</text>
        </g>
        <g stroke="#ed1c24" stroke-width="3.600">
          <rect x="50" y="22" width="36.500" height="21"/><rect x="218" y="111" width="51.500" height="19.500"/>
          <rect x="226" y="155" width="66.500" height="20.500"/><rect x="227" y="183.500" width="51.500" height="43.500"/>
          <path d="M675.500 386h14v25.500h6.500l-13.500 23-13.500-23h6.500z" fill="#fff"/>
        </g>
        <text x="648.500" y="363.500" font-size="15.500" font-family="Noto Sans CJK SC" fill="#ed1c24" textLength="75" lengthAdjust="spacingAndGlyphs">点击下一步</text>
      </svg>`;
  }
}
